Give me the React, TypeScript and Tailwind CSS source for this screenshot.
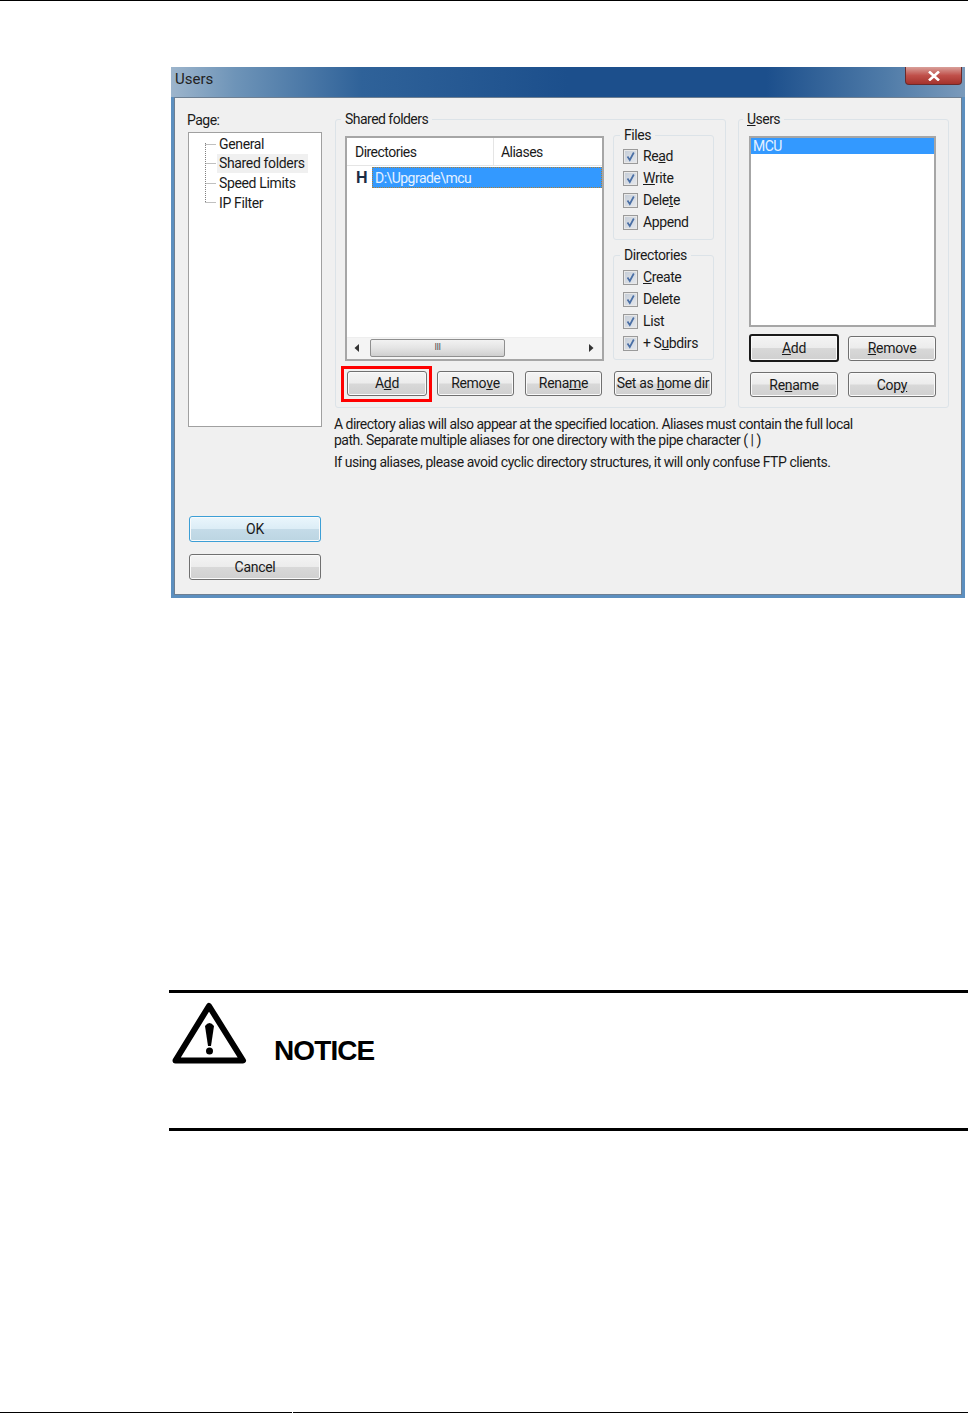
import type { ReactNode } from "react";

const greyFace =
  "border-[#707070] bg-[linear-gradient(#f4f4f4_0%,#ececec_48%,#d8d8d8_52%,#d0d0d0_100%)]";

function Btn({ className, face = greyFace, children }: { className: string; face?: string; children: ReactNode }) {
  return (
    <div className={`flex items-center justify-center rounded-[3px] border tracking-[-0.3px] text-[#1a1a1a] shadow-[inset_0_0_0_1px_#fafafa] ${face} ${className}`}>
      {children}
    </div>
  );
}

function Group({ title, titleLeft = "left-[6px]", className, children }: { title: ReactNode; titleLeft?: string; className: string; children?: ReactNode }) {
  return (
    <div className={`relative rounded-[3px] border border-[#dce3e8] ${className}`}>
      <span className={`absolute top-[-10px] bg-[#f0f0f0] px-[4px] leading-[18px] text-[#1a1a1a] ${titleLeft}`}>{title}</span>
      {children}
    </div>
  );
}

function Check({ children }: { children: ReactNode }) {
  return (
    <div className="flex h-[22px] items-center gap-[5px]">
      <span className="flex h-[15px] w-[15px] items-center justify-center border border-[#9a9a9a] bg-[linear-gradient(135deg,#c4ccd6,#e6e9ee)] shadow-[inset_0_0_0_1px_#e8e8e8]">
        <svg width="11" height="11" viewBox="0 0 11 11">
          <path d="M2.5 5.5 L4.8 9 L8.8 1.5" fill="none" stroke="#4a6fa5" strokeWidth="1.7" />
        </svg>
      </span>
      <span>{children}</span>
    </div>
  );
}

export default function App() {
  return (
    <div className="relative h-[1413px] w-[968px] overflow-hidden bg-white font-['Roboto','Liberation_Sans',sans-serif] text-[14px] tracking-[-0.53px] text-[#1a1a1a]">
      <div className="h-px bg-black" />

      {/* dialog */}
      <div className="mt-[66px] ml-[171px] flex h-[531px] w-[794px] flex-col bg-[#5c8fbf] px-[3px] pb-[3px]">
        <div className="relative -mx-[3px] flex h-[30px] shrink-0 items-start bg-[linear-gradient(90deg,#9db5cc_0%,#6e94b8_8%,#2f6299_24%,#1c4f8c_50%,#1c4f8c_75%,#4f7ba8_90%,#7a9abb_100%)] pl-[4px] text-[15px] leading-[25px] tracking-[0px] text-[#222]">
          Users
          <div className="absolute top-0 right-[3px] flex h-[18px] w-[57px] items-center justify-center rounded-b-[4px] border border-t-0 border-[#6b2a2a] bg-[linear-gradient(#d9a09a,#c0504a_50%,#a5322c)]">
            <svg width="14" height="10" viewBox="0 0 14 10">
              <path d="M2 0.5 L12 9.5 M12 0.5 L2 9.5" stroke="#fff" strokeWidth="2.6" />
            </svg>
          </div>
        </div>

        <div className="flex min-h-0 flex-1 border border-[#6d7f92] bg-[#f0f0f0] pl-[12px]">
          {/* left column */}
          <div className="w-[136px] shrink-0 pt-[12px]">
            <div className="leading-[20px]">Page:</div>
            <div className="relative mt-[2px] ml-[1px] h-[295px] w-[134px] border border-[#a0a0a0] bg-white pt-[2px] pl-[30px] tracking-[-0.35px]">
              <svg className="absolute top-[10px] left-[15px]" width="13" height="62" viewBox="0 0 13 62">
                <path d="M1.5 0 V60 M1.5 1.5 H12 M1.5 20.5 H12 M1.5 40.5 H12 M1.5 59.5 H12" fill="none" stroke="#808080" strokeDasharray="1 1" />
              </svg>
              <div className="h-[19px] leading-[19px]">General</div>
              <div className="-ml-[2px] h-[19px] w-[91px] bg-[#f0f0f0] pl-[2px] leading-[19px]">Shared folders</div>
              <div className="mt-[1px] h-[20px] leading-[19px]">Speed Limits</div>
              <div className="h-[20px] leading-[19px]">IP Filter</div>
            </div>
            <Btn
              face="border-[#3c9fd6] bg-[linear-gradient(#eaf6fc,#dcedf6_48%,#c4dbe8_52%,#bcd5e2)]"
              className="mt-[89px] ml-[2px] h-[26px] w-[132px]"
            >
              OK
            </Btn>
            <Btn className="mt-[12px] ml-[2px] h-[26px] w-[132px]">Cancel</Btn>
          </div>

          {/* right area */}
          <div className="ml-[11px] flex-1 pt-[21px]">
            <div className="flex">
              <Group title="Shared folders" titleLeft="left-[5px]" className="ml-[1px] h-[289px] w-[391px] pt-[16px] pl-[9px]">
                <div className="flex gap-[9px]">
                  <div className="flex h-[225px] w-[259px] flex-col border-2 border-[#a6a6a6] bg-white">
                    <div className="flex h-[28px] shrink-0 border-b border-[#e5e5e5] leading-[28px]">
                      <div className="w-[147px] border-r border-[#e5e5e5] pl-[8px]">Directories</div>
                      <div className="pl-[7px]">Aliases</div>
                    </div>
                    <div className="mt-[1px] flex h-[21px] items-center">
                      <span className="w-[25px] pl-[9px] font-['Liberation_Sans',sans-serif] text-[16px] font-bold text-[#1c2c44]">H</span>
                      <span className="h-[21px] flex-1 border border-dotted border-[#a9803c] bg-[#3399ff] pl-[2px] leading-[20px] text-[#e6f2ff]">D:\Upgrade\mcu</span>
                    </div>
                    <div className="flex-1" />
                    <div className="flex h-[22px] items-center border-t border-[#eeeeee] bg-[#f4f4f4] pb-[2px]">
                      <svg className="ml-[7px]" width="6" height="8" viewBox="0 0 6 8"><path d="M5 0 L0.5 4 L5 8 Z" fill="#333" /></svg>
                      <div className="ml-[10px] flex h-[18px] w-[135px] items-center justify-center rounded-[2px] border border-[#8f8f8f] bg-[linear-gradient(#f2f2f2,#e4e4e4_50%,#cfcfcf)] text-[9px] leading-none text-[#555]">III</div>
                      <svg className="ml-[83px]" width="6" height="8" viewBox="0 0 6 8"><path d="M1 0 L5.5 4 L1 8 Z" fill="#333" /></svg>
                    </div>
                  </div>
                  <div className="-mt-[1px] flex flex-col gap-[15px] tracking-[-0.4px]">
                    <Group title="Files" className="h-[105px] w-[101px] pt-[9px] pl-[9px]">
                      <Check>Re<u>a</u>d</Check>
                      <Check><u>W</u>rite</Check>
                      <Check>Dele<u>t</u>e</Check>
                      <Check>Append</Check>
                    </Group>
                    <Group title="Directories" className="h-[105px] w-[101px] pt-[10px] pl-[9px]">
                      <Check><u>C</u>reate</Check>
                      <Check>Delete</Check>
                      <Check>List</Check>
                      <Check>+ S<u>u</u>bdirs</Check>
                    </Group>
                  </div>
                </div>
                <div className="mt-[10px] ml-[2px] flex h-[25px]">
                  <div className="relative">
                    <Btn className="h-[25px] w-[80px] pb-[1px]">A<u>d</u>d</Btn>
                    <div className="absolute -top-[5px] -right-[5px] -bottom-[6px] -left-[6px] border-[3px] border-[#ff0000]" />
                  </div>
                  <Btn className="ml-[10px] h-[25px] w-[77px] pb-[1px]">Remo<u>v</u>e</Btn>
                  <Btn className="ml-[11px] h-[25px] w-[77px] pb-[1px]">Rena<u>m</u>e</Btn>
                  <Btn className="ml-[12px] h-[25px] w-[98px] pb-[1px] whitespace-pre">Set as <u>h</u>ome dir</Btn>
                </div>
              </Group>

              <Group title={<><u>U</u>sers</>} titleLeft="left-[4px]" className="ml-[12px] h-[289px] w-[211px] pt-[16px] pl-[10px]">
                <div className="h-[191px] w-[187px] border-2 border-[#a6a6a6] bg-white">
                  <div className="h-[16px] w-[183px] bg-[#3399ff] pl-[2px] leading-[16px] text-[#e6f2ff]">MCU</div>
                </div>
                <div className="mt-[7px] flex h-[28px] items-center gap-[9px]">
                  <Btn face="border-2 border-[#1a1a1a] bg-[linear-gradient(#f4f4f4_0%,#ececec_48%,#d8d8d8_52%,#d0d0d0_100%)]" className="h-[28px] w-[90px]"><u>A</u>dd</Btn>
                  <Btn className="h-[25px] w-[88px]"><u>R</u>emove</Btn>
                </div>
                <div className="mt-[10px] ml-[1px] flex gap-[10px]">
                  <Btn className="h-[25px] w-[88px] pt-[1px]">Re<u>n</u>ame</Btn>
                  <Btn className="h-[25px] w-[88px] pt-[1px]">Cop<u>y</u></Btn>
                </div>
              </Group>
            </div>

            <div className="mt-[8px] leading-[16px] whitespace-nowrap">
              <p>A directory alias will also appear at the specified location. Aliases must contain the full local</p>
              <p className="tracking-[-0.49px]">path. Separate multiple aliases for one directory with the pipe character ( | )</p>
              <p className="mt-[6px] tracking-[-0.46px]">If using aliases, please avoid cyclic directory structures, it will only confuse FTP clients.</p>
            </div>
          </div>
        </div>
      </div>

      {/* notice */}
      <div className="mt-[392px] ml-[169px] flex h-[141px] items-start border-y-[3px] border-black">
        <svg className="mt-[9px] ml-[3px]" width="75" height="63" viewBox="0 0 75 63">
          <path d="M37 4 L71 58.5 H3.5 Z" fill="none" stroke="#000" strokeWidth="6" strokeLinejoin="round" />
          <path d="M33 24 Q37.5 18 42 24 L39 44 H36 Z" fill="#000" />
          <circle cx="37.5" cy="49" r="3.5" fill="#000" />
        </svg>
        <span className="mt-[40px] ml-[27px] font-['Liberation_Sans',sans-serif] text-[28px] leading-[36px] font-bold tracking-[-0.9px] text-black">NOTICE</span>
      </div>

      {/* footer rule */}
      <div className="absolute inset-x-0 bottom-0 flex h-px">
        <div className="w-[292px] bg-black" />
        <div className="ml-px flex-1 bg-black" />
      </div>
    </div>
  );
}
